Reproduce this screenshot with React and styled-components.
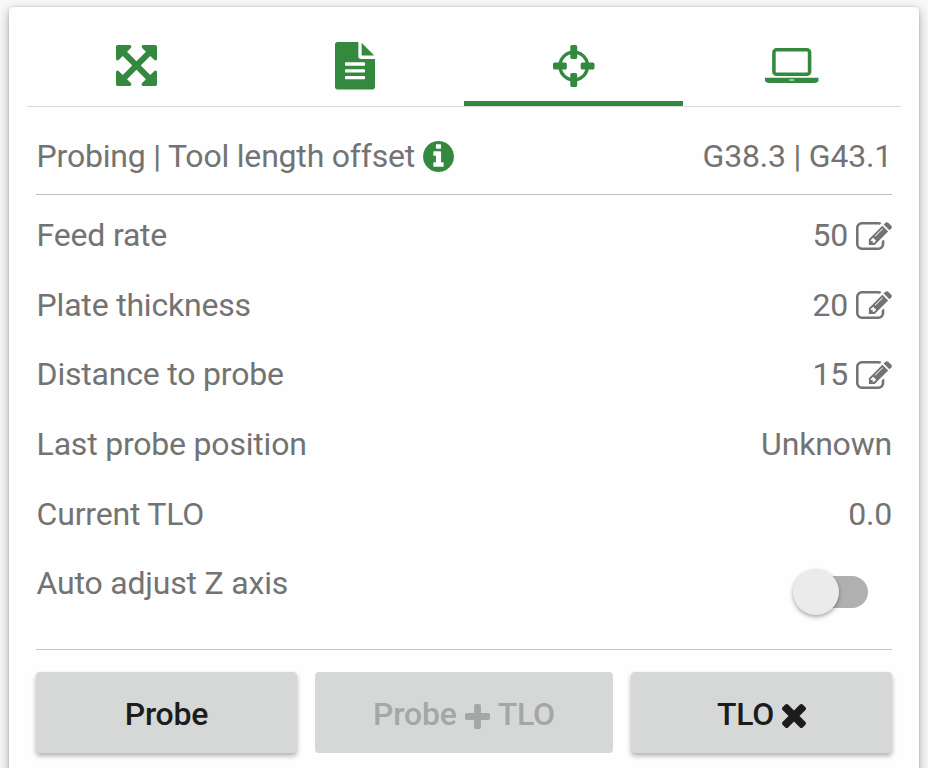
import React, { useState } from "react";
import styled, { createGlobalStyle, css } from "styled-components";

const GlobalStyle = createGlobalStyle`
  * { box-sizing: border-box; }
  body {
    margin: 0;
    background: #f8f8f8;
    font-family: Roboto, "Liberation Sans", sans-serif;
  }
`;

const GREEN = "#338a3e";

const glyphs = {
  move: {
    box: "128 128 1536 1536",
    d: "M1411 541l-355 355 355 355 144-144q29-31 70-14 39 17 39 59v448q0 26-19 45t-45 19h-448q-42 0-59-40-17-39 14-69l144-144-355-355-355 355 144 144q31 30 14 69-17 40-59 40h-448q-26 0-45-19t-19-45v-448q0-42 40-59 39-17 69 14l144 144 355-355-355-355-144 144q-19 19-45 19-12 0-24-5-40-17-40-59v-448q0-26 19-45t45-19h448q42 0 59 40 17 39-14 69l-144 144 355 355 355-355-144-144q-31-30-14-69 17-40 59-40h448q26 0 45 19t19 45v448q0 42-39 59-13 5-25 5-26 0-45-19z",
  },
  file: {
    box: "128 0 1536 1792",
    d: "M1596 476q14 14 28 36h-472v-472q22 14 36 28zm-476 164h544v1056q0 40-28 68t-68 28h-1344q-40 0-68-28t-28-68v-1600q0-40 28-68t68-28h800v544q0 40 28 68t68 28zm160 736v-64q0-14-9-23t-23-9h-704q-14 0-23 9t-9 23v64q0 14 9 23t23 9h704q14 0 23-9t9-23zm0-256v-64q0-14-9-23t-23-9h-704q-14 0-23 9t-9 23v64q0 14 9 23t23 9h704q14 0 23-9t9-23zm0-256v-64q0-14-9-23t-23-9h-704q-14 0-23 9t-9 23v64q0 14 9 23t23 9h704q14 0 23-9t9-23z",
  },
  target: {
    box: "128 128 1536 1536",
    d: "M1325 1024h-109q-26 0-45-19t-19-45v-128q0-26 19-45t45-19h109q-32-108-112.5-188.5t-188.5-112.5v109q0 26-19 45t-45 19h-128q-26 0-45-19t-19-45v-109q-108 32-188.5 112.5t-112.5 188.5h109q26 0 45 19t19 45v128q0 26-19 45t-45 19h-109q32 108 112.5 188.5t188.5 112.5v-109q0-26 19-45t45-19h128q26 0 45 19t19 45v109q108-32 188.5-112.5t112.5-188.5zm339-192v128q0 26-19 45t-45 19h-143q-37 161-154.5 278.5t-278.5 154.5v143q0 26-19 45t-45 19h-128q-26 0-45-19t-19-45v-143q-161-37-278.5-154.5t-154.5-278.5h-143q-26 0-45-19t-19-45v-128q0-26 19-45t45-19h143q37-161 154.5-278.5t278.5-154.5v-143q0-26 19-45t45-19h128q26 0 45 19t19 45v143q161 37 278.5 154.5t154.5 278.5h143q26 0 45 19t19 45z",
  },
  laptop: {
    box: "0 128 1920 1280",
    d: "M416 1152q-66 0-113-47t-47-113v-704q0-66 47-113t113-47h1088q66 0 113 47t47 113v704q0 66-47 113t-113 47h-1088zm-32-864v704q0 13 9.5 22.5t22.5 9.5h1088q13 0 22.5-9.5t9.5-22.5v-704q0-13-9.5-22.5t-22.5-9.5h-1088q-13 0-22.5 9.5t-9.5 22.5zm1376 928h160v96q0 40-47 68t-113 28h-1600q-66 0-113-28t-47-68v-96h1760zm-720 96q16 0 16-16t-16-16h-160q-16 0-16 16t16 16h160z",
  },
  info: {
    box: "128 128 1536 1536",
    d: "M1152 1376v-160q0-14-9-23t-23-9h-96v-512q0-14-9-23t-23-9h-320q-14 0-23 9t-9 23v160q0 14 9 23t23 9h96v320h-96q-14 0-23 9t-9 23v160q0 14 9 23t23 9h448q14 0 23-9t9-23zm-128-896v-160q0-14-9-23t-23-9h-192q-14 0-23 9t-9 23v160q0 14 9 23t23 9h192q14 0 23-9t9-23zm640 416q0 209-103 385.5t-279.5 279.5-385.5 103-385.5-103-279.5-279.5-103-385.5 103-385.5 279.5-279.5 385.5-103 385.5 103 279.5 279.5 103 385.5z",
  },
  edit: {
    box: "0 128 1792 1408",
    d: "M888 1184l116-116-152-152-116 116v56h96v96h56zm440-720q-16-16-33 1l-350 350q-17 17-1 33t33-1l350-350q17-17 1-33zm80 594v190q0 119-84.5 203.5t-203.5 84.5h-832q-119 0-203.5-84.5t-84.5-203.5v-832q0-119 84.5-203.5t203.5-84.5h832q63 0 117 25 15 7 18 23 3 17-9 29l-49 49q-14 14-32 8-23-6-45-6h-832q-66 0-113 47t-47 113v832q0 66 47 113t113 47h832q66 0 113-47t47-113v-126q0-13 9-22l64-64q15-15 35-7t20 29zm-96-738l288 288-672 672h-288v-288zm444 132l-92 92-288-288 92-92q28-28 68-28t68 28l152 152q28 28 28 68t-28 68z",
  },
  plus: {
    box: "192 128 1408 1408",
    d: "M1600 736v192q0 40-28 68t-68 28h-416v416q0 40-28 68t-68 28h-192q-40 0-68-28t-28-68v-416h-416q-40 0-68-28t-28-68v-192q0-40 28-68t68-28h416v-416q0-40 28-68t68-28h192q40 0 68 28t28 68v416h416q40 0 68 28t28 68z",
  },
  times: {
    box: "302 366 1188 1188",
    d: "M1490 1322q0 40-28 68l-136 136q-28 28-68 28t-68-28l-294-294-294 294q-28 28-68 28t-68-28l-136-136q-28-28-28-68t28-68l294-294-294-294q-28-28-28-68t28-68l136-136q28-28 68-28t68 28l294 294 294-294q28-28 68-28t68 28l136 136q28 28 28 68t-28 68l-294 294 294 294q28 28 28 68z",
  },
};

const Svg = styled.svg`
  display: block;
  flex: none;
  overflow: visible;
  fill: currentColor;
  margin-top: ${(p) => p.$drop || 0}px;
`;

const Icon = ({ name, width, height, drop }) => (
  <Svg viewBox={glyphs[name].box} width={width} height={height} $drop={drop} preserveAspectRatio="none" aria-hidden="true">
    <path d={glyphs[name].d} />
  </Svg>
);

const Page = styled.main`
  height: 768px;
  padding: 7px 9px 0;
  overflow: hidden;
`;

const Card = styled.section`
  height: 800px;
  padding: 0 18px;
  background: #fefefe;
  border-radius: 4px;
  box-shadow: 0 4px 12px rgba(0, 0, 0, 0.3), 0 0 3px rgba(0, 0, 0, 0.16);
`;

const Tabs = styled.nav`
  display: grid;
  grid-template-columns: repeat(4, 1fr);
  height: 100px;
  border-bottom: 1px solid #d9d9d9;
`;

const Tab = styled.button`
  display: flex;
  align-items: center;
  justify-content: center;
  padding: 28px 0 5px;
  border: 0;
  border-bottom: 5px solid ${(p) => (p.$active ? GREEN : "transparent")};
  background: none;
  color: ${GREEN};
`;

const Body = styled.div`
  padding: 0 9px;
  color: #737373;
  font-size: 32px;
  line-height: 38px;
  letter-spacing: -0.2px;
`;

const line = css`
  display: flex;
  justify-content: space-between;
`;

const Heading = styled.header`
  ${line}
  height: 88px;
  padding-top: 30px;
  border-bottom: 1px solid #bdbdbd;
`;

const Settings = styled.div`
  height: 455px;
  padding-top: 21.2px;
  border-bottom: 1px solid #c8c8c8;
`;

const Row = styled.div`
  ${line}
  height: 69.6px;
`;

const Label = styled.span`
  display: flex;
  gap: 8px;
  height: 38px;
  padding-left: 0.6px;
  white-space: nowrap;
`;

const InfoMark = styled.span`
  color: ${GREEN};
`;

const Switch = styled.button`
  display: flex;
  align-items: center;
  width: 72px;
  height: 32px;
  margin: 11.6px 24px 0 0;
  padding: 0;
  border: 0;
  border-radius: 16px;
  background: #b0b0b0;
`;

const Thumb = styled.span`
  flex: none;
  width: 46px;
  height: 46px;
  margin-left: ${(p) => (p.$on ? 29 : -3)}px;
  border-radius: 50%;
  background: #ebebeb;
  box-shadow: 0 2px 4px rgba(0, 0, 0, 0.35);
`;

const Actions = styled.footer`
  display: grid;
  grid-template-columns: 261px 298px 261px;
  justify-content: space-between;
  padding-top: 22px;
`;

const Action = styled.button`
  display: flex;
  justify-content: center;
  gap: 8px;
  height: 81px;
  padding: 23px 0 0;
  border: 0;
  border-radius: 4px;
  background: #d6d8d7;
  color: #1c1c1c;
  font: 500 32px/38px Roboto, "Liberation Sans", sans-serif;
  letter-spacing: -0.2px;
  box-shadow: 0 3px 5px rgba(0, 0, 0, 0.3);

  &:disabled {
    color: #a5a7a6;
    box-shadow: none;
  }
`;

const tabs = [
  { name: "move", width: 41, height: 41 },
  { name: "file", width: 40, height: 47.5, drop: 1 },
  { name: "target", width: 41.5, height: 42 },
  { name: "laptop", width: 53.5, height: 35 },
];

const rows = [
  { label: "Feed rate", value: "50", editable: true },
  { label: "Plate thickness", value: "20", editable: true },
  { label: "Distance to probe", value: "15", editable: true },
  { label: "Last probe position", value: "Unknown" },
  { label: "Current TLO", value: "0.0" },
];

export default function App() {
  const [active, setActive] = useState("target");
  const [auto, setAuto] = useState(false);
  return (
    <>
      <GlobalStyle />
      <Page>
        <Card>
          <Tabs>
            {tabs.map((t) => (
              <Tab key={t.name} $active={t.name === active} onClick={() => setActive(t.name)} aria-label={t.name}>
                <Icon {...t} />
              </Tab>
            ))}
          </Tabs>
          <Body>
            <Heading>
              <Label>
                Probing | Tool length offset
                <InfoMark>
                  <Icon name="info" width={31} height={31} drop={4} />
                </InfoMark>
              </Label>
              <Label>G38.3 | G43.1</Label>
            </Heading>
            <Settings>
              {rows.map((r) => (
                <Row key={r.label}>
                  <Label>{r.label}</Label>
                  <Label>
                    {r.value}
                    {r.editable && <Icon name="edit" width={36} height={28} drop={5.6} />}
                  </Label>
                </Row>
              ))}
              <Row>
                <Label>Auto adjust Z axis</Label>
                <Switch role="switch" aria-checked={auto} aria-label="Auto adjust Z axis" onClick={() => setAuto(!auto)}>
                  <Thumb $on={auto} />
                </Switch>
              </Row>
            </Settings>
            <Actions>
              <Action>Probe</Action>
              <Action disabled>
                Probe
                <Icon name="plus" width={25} height={25} drop={9} />
                TLO
              </Action>
              <Action>
                TLO
                <Icon name="times" width={24} height={24} drop={9} />
              </Action>
            </Actions>
          </Body>
        </Card>
      </Page>
    </>
  );
}
